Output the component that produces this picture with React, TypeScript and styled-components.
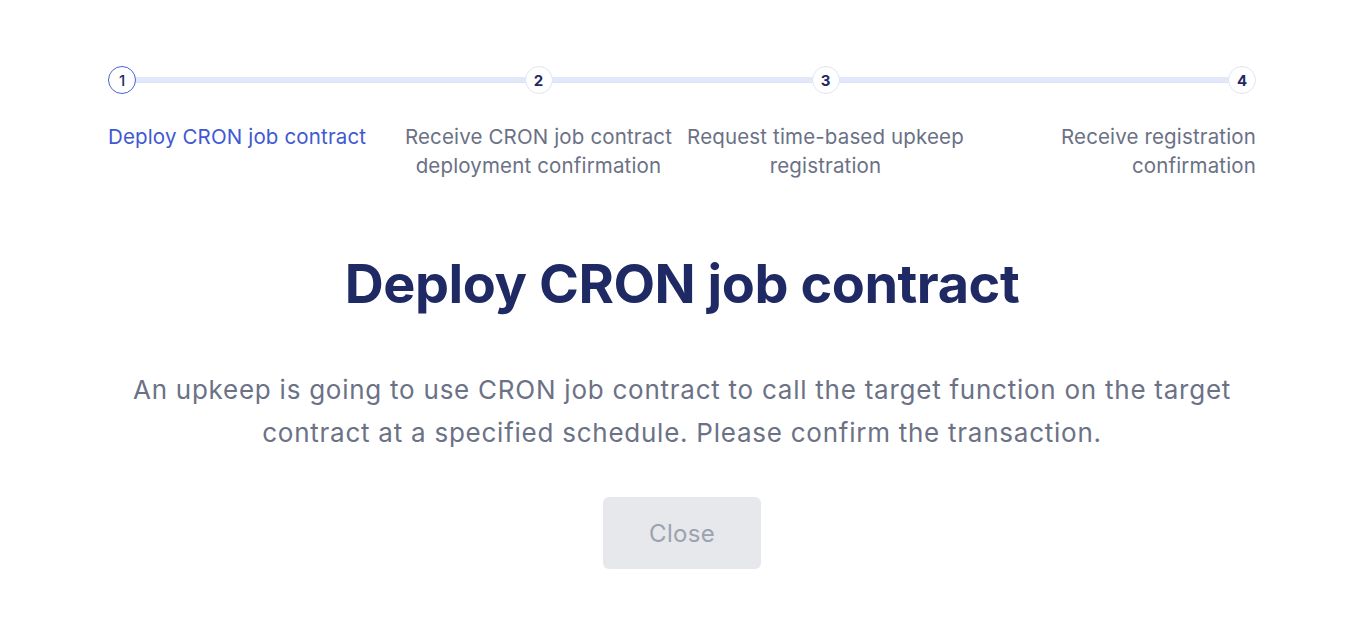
import React from "react";
import styled, { createGlobalStyle } from "styled-components";

const Global = createGlobalStyle`
  html, body { margin: 0; padding: 0; background: #ffffff; }
  body { font-family: Inter, "Noto Sans", sans-serif; -webkit-font-smoothing: antialiased; }
`;

const Page = styled.div`
  padding: 66px 100px 0 108px;
  display: flex;
  flex-direction: column;
  align-items: stretch;
`;

const Stepper = styled.div`
  position: relative;
  display: grid;
  grid-template-columns: repeat(4, 1fr);
`;

const Track = styled.div`
  position: absolute;
  left: 14px;
  right: 14px;
  top: 11px;
  height: 6px;
  background: #e2e7fa;
  border-bottom: 1px dotted #d5dcf5;
  box-sizing: border-box;
`;

type Align = "start" | "center" | "end";

const Step = styled.div<{ $align: Align }>`
  position: relative;
  display: flex;
  flex-direction: column;
  align-items: ${(p) => (p.$align === "start" ? "flex-start" : p.$align === "end" ? "flex-end" : "center")};
  text-align: ${(p) => (p.$align === "start" ? "left" : p.$align === "end" ? "right" : "center")};
`;

const Circle = styled.div<{ $active?: boolean }>`
  width: 28px;
  height: 28px;
  box-sizing: border-box;
  border-radius: 50%;
  background: #ffffff;
  border: 1.5px solid ${(p) => (p.$active ? "#4a63d6" : "#e1e5f5")};
  color: #1f2a64;
  font-size: 15px;
  font-weight: ${(p) => (p.$active ? 500 : 700)};
  display: flex;
  align-items: center;
  justify-content: center;
`;

const Label = styled.div<{ $active?: boolean }>`
  margin-top: 28px;
  font-size: 20.5px;
  line-height: 29px;
  letter-spacing: 0.15px;
  color: ${(p) => (p.$active ? "#4059d2" : "#6b7185")};
  white-space: nowrap;
`;

const Content = styled.div`
  display: flex;
  flex-direction: column;
  align-items: center;
  margin-top: 70px;
`;

const Title = styled.h1`
  margin: 0;
  font-size: 54px;
  line-height: 68px;
  font-weight: 700;
  color: #1f2a64;
  letter-spacing: -0.45px;
`;

const Body = styled.p`
  margin: 50px 0 0;
  font-size: 26px;
  line-height: 43px;
  letter-spacing: 0.75px;
  color: #6c7286;
  text-align: center;
`;

const Button = styled.button`
  margin-top: 43px;
  width: 158px;
  height: 72px;
  border: none;
  border-radius: 6px;
  background: #e6e8eb;
  color: #9da2b0;
  font-family: inherit;
  font-size: 24px;
  letter-spacing: 0.3px;
  cursor: default;
`;

const steps: { n: number; label: React.ReactNode; align: Align; active?: boolean }[] = [
  { n: 1, label: "Deploy CRON job contract", align: "start", active: true },
  { n: 2, label: <>Receive CRON job contract<br />deployment confirmation</>, align: "center" },
  { n: 3, label: <>Request time-based upkeep<br />registration</>, align: "center" },
  { n: 4, label: <>Receive registration<br />confirmation</>, align: "end" },
];

export default function App() {
  return (
    <>
      <Global />
      <Page>
        <Stepper>
          <Track />
          {steps.map((s) => (
            <Step key={s.n} $align={s.align}>
              <Circle $active={s.active}>{s.n}</Circle>
              <Label $active={s.active}>{s.label}</Label>
            </Step>
          ))}
        </Stepper>
        <Content>
          <Title>Deploy CRON job contract</Title>
          <Body>
            An upkeep is going to use CRON job contract to call the target function on the target
            <br />
            contract at a specified schedule. Please confirm the transaction.
          </Body>
          <Button>Close</Button>
        </Content>
      </Page>
    </>
  );
}
